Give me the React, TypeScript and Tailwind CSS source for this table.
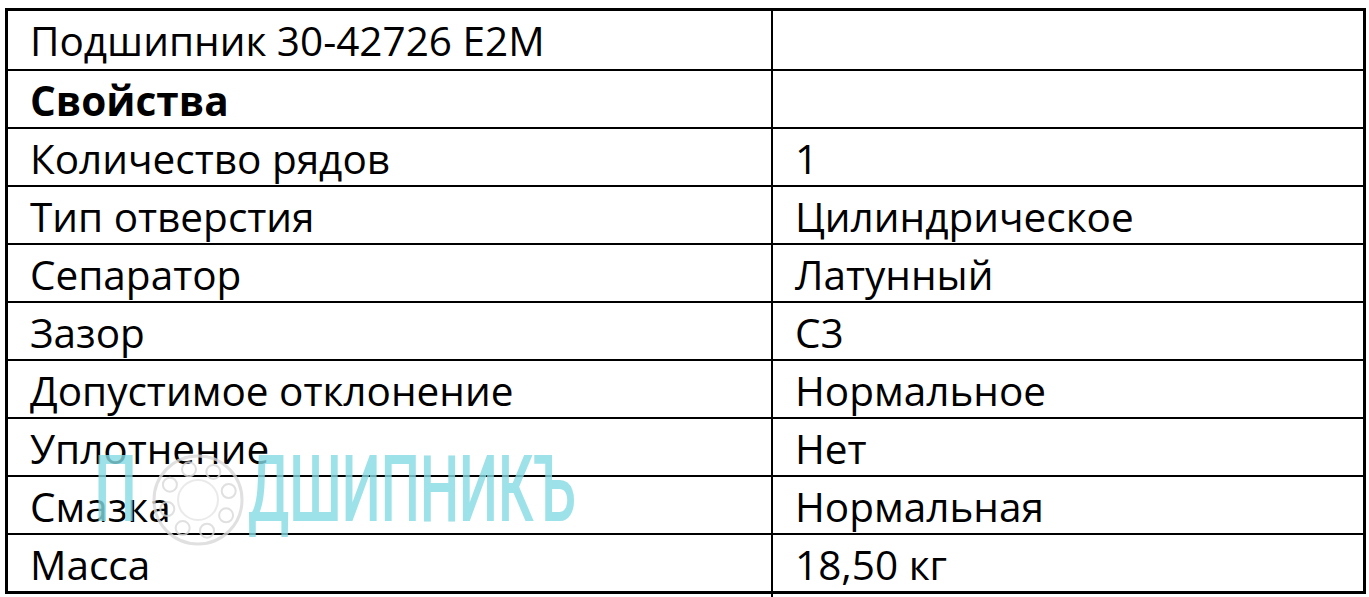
import React from "react";

const rows: [string, string, boolean?][] = [
  ["Подшипник 30-42726 E2M", ""],
  ["Свойства", "", true],
  ["Количество рядов", "1"],
  ["Тип отверстия", "Цилиндрическое"],
  ["Сепаратор", "Латунный"],
  ["Зазор", "C3"],
  ["Допустимое отклонение", "Нормальное"],
  ["Уплотнение", "Нет"],
  ["Смазка", "Нормальная"],
  ["Масса", "18,50 кг"],
];

const balls = [0, 1, 2, 3, 4, 5, 6, 7];

const Watermark = () => (
  <div className="pointer-events-none absolute left-[94px] top-[430px] flex items-center">
    <span
      className="w-[58px] text-[92px] font-medium leading-none text-[#86dbe4] opacity-80"
      style={{ fontFamily: "Roboto, sans-serif", transform: "scaleX(0.66)", transformOrigin: "left" }}
    >
      П
    </span>
    <svg width="100" height="100" viewBox="0 0 100 100" className="-ml-[4px] mt-[20px] opacity-80">
      <circle cx="50" cy="50" r="44" fill="none" stroke="#d9d9d9" strokeWidth="3" />
      <circle cx="50" cy="50" r="20" fill="none" stroke="#e6e6e6" strokeWidth="2" />
      {balls.map((i) => {
        const a = (i / 8) * Math.PI * 2 + 0.5;
        return (
          <circle
            key={i}
            cx={50 + Math.cos(a) * 32}
            cy={50 + Math.sin(a) * 32}
            r="7"
            fill="none"
            stroke="#d9d9d9"
            strokeWidth="2"
          />
        );
      })}
    </svg>
    <span
      className="w-[335px] text-[92px] font-medium leading-none text-[#86dbe4] opacity-80"
      style={{ fontFamily: "Roboto, sans-serif", transform: "scaleX(0.6)", transformOrigin: "left" }}
    >
      ДШИПНИКЪ
    </span>
  </div>
);

export default function App() {
  return (
    <div className="relative h-[597px] w-[1369px] bg-white pl-[5px] pt-[8px]" style={{ fontFamily: '"Open Sans", sans-serif' }}>
      <div className="w-[1361px] border-[3px] border-black">
        {rows.map(([label, value, bold], i) => (
          <div
            key={i}
            className={`grid h-[58px] grid-cols-[765px_1fr] ${i > 0 ? "border-t-2 border-black" : ""}`}
          >
            <div
              className={`flex items-center border-r-2 border-black pb-[4px] pl-[22px] text-[40.5px] text-black ${bold ? "font-bold" : ""}`}
            >
              {label}
            </div>
            <div className="flex items-center pb-[4px] pl-[22px] text-[40.5px] text-black">{value}</div>
          </div>
        ))}
      </div>
      <Watermark />
    </div>
  );
}
